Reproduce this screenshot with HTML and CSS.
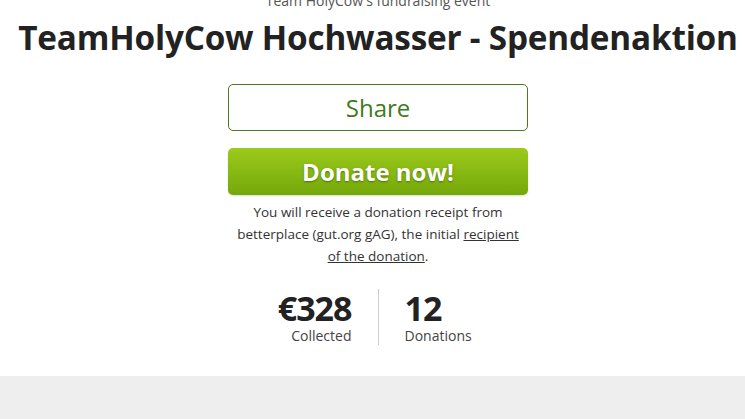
FILE: index.html
```html
<!DOCTYPE html>
<html>
<head>
  <title>TeamHolyCow Hochwasser - Spendenaktion</title>
  <link rel="stylesheet" href="styles.css">
</head>
<body>
  <div class="page">
    <div class="header">
      <p class="subtitle">Team HolyCow's fundraising event</p>
      <h1 class="title">TeamHolyCow Hochwasser - Spendenaktion</h1>
    </div>

    <div class="actions">
      <a class="btn btn-share" href="#">Share</a>
      <a class="btn btn-donate" href="#">Donate now!</a>
      <p class="receipt">
        You will receive a donation receipt from betterplace (gut.org gAG), the initial
        <a href="#">recipient of the donation</a>.
      </p>
    </div>

    <div class="stats">
      <div class="stat stat-left">
        <span class="stat-value">€328</span>
        <span class="stat-label">Collected</span>
      </div>
      <div class="stat stat-right">
        <span class="stat-value">12</span>
        <span class="stat-label">Donations</span>
      </div>
    </div>
  </div>

  <div class="gray-section">
    <h2 class="section-title">Über dieses Projekt</h2>
  </div>
</body>
</html>
```

FILE: styles.css
```css
body {
  margin: 0;
  padding-left: 11px;  /* content is centred a little right of the window */
  background: #fff;
  color: #222;
  font-family: "Open Sans", "Noto Sans", sans-serif;
  overflow: hidden;
}

.page {
  margin-top: -8px;  /* page is scrolled a bit */
  padding-bottom: 31px;
}

.header {
  text-align: center;
}

.subtitle {
  margin: 0;
  font-size: 14px;
  line-height: 18px;
  color: #555;
}

.title {
  margin: 5px 0 0;
  font-size: 33.3px;
  line-height: 44px;
  font-weight: 700;
  color: #222;
  letter-spacing: -0.2px;
}

.actions {
  width: 300px;
  margin: 25px auto 0;
  display: flex;
  flex-direction: column;
  align-items: stretch;
}

.btn {
  display: flex;
  align-items: center;
  justify-content: center;
  height: 47px;
  box-sizing: border-box;
  border-radius: 5px;
  font-size: 24px;
  text-decoration: none;
}

.btn-share {
  border: 1px solid #4b7a1e;
  color: #3f7a1c;
  background: #fff;
}

.btn-donate {
  margin-top: 17px;
  color: #fff;
  font-weight: 700;
  background: linear-gradient(to bottom, #9cca1c, #74a80a);
  text-shadow: 0 1px 2px rgba(40, 70, 0, 0.6);
  box-shadow: 0 1px 2px rgba(0, 0, 0, 0.15);
}

.receipt {
  margin: 6px 0 0;
  padding: 0 6px;
  font-size: 13.5px;
  line-height: 22px;
  text-align: center;
  color: #333;
}

.receipt a {
  color: #333;
}

.stats {
  display: flex;
  justify-content: center;
  margin-top: 22px;
}

.stat {
  display: flex;
  flex-direction: column;
  width: 100px;
}

.stat-left {
  align-items: flex-end;
  padding-right: 26px;
  border-right: 1px solid #ccc;
}

.stat-right {
  align-items: flex-start;
  padding-left: 26px;
}

.stat-value {
  font-size: 34px;
  line-height: 38px;
  font-weight: 700;
  color: #222;
  letter-spacing: -1px;
}

.stat-label {
  font-size: 14px;
  line-height: 18px;
  color: #444;
}

.gray-section {
  margin-left: -11px;
  padding-left: 11px;
  background: #eee;
  padding-top: 45px;
  height: 200px;
  text-align: center;
}

.section-title {
  margin: 0;
  font-size: 26px;
  line-height: 30px;
  font-weight: 700;
  color: #222;
}
```
